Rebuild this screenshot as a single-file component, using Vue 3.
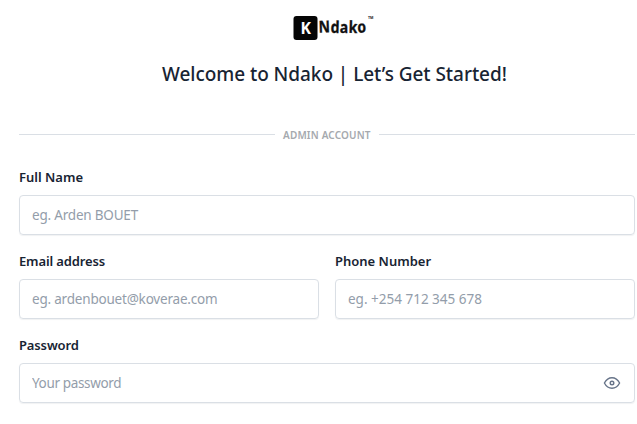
<script setup>
import { ref } from 'vue'

const showPassword = ref(false)
const fields = [
  { id: 'name', label: 'Full Name', type: 'text', placeholder: 'eg. Arden BOUET', wide: true },
  { id: 'email', label: 'Email address', type: 'email', placeholder: 'eg. ardenbouet@koverae.com' },
  { id: 'phone', label: 'Phone Number', type: 'tel', placeholder: 'eg. +254 712 345 678' },
  { id: 'password', label: 'Password', type: 'password', placeholder: 'Your password', wide: true },
]
</script>

<template>
  <main class="page">
    <svg class="logo" width="84" height="28" viewBox="0 0 84 28">
      <rect x="1.5" y="3" width="24" height="24" rx="3" fill="#050505" />
      <text class="mark" x="8.6" y="20.5" textLength="10.5" lengthAdjust="spacingAndGlyphs">K</text>
      <text class="word" transform="scale(.85 1)" y="19.8" x="31.4 45.4 56.2 66.6 77" rotate="-2 2 0 2 -2">Ndako</text>
      <text class="tm" x="76" y="6" textLength="5.5" lengthAdjust="spacingAndGlyphs">TM</text>
    </svg>
    <h1 class="title">Welcome to Ndako | Let’s Get Started!</h1>
    <div class="divider"><span>Admin account</span></div>
    <form class="form" @submit.prevent>
      <div v-for="f in fields" :key="f.id" class="field" :class="[f.id, { wide: f.wide }]">
        <label :for="f.id">{{ f.label }}</label>
        <div class="control">
          <input
            :id="f.id"
            :type="f.id === 'password' && showPassword ? 'text' : f.type"
            :placeholder="f.placeholder"
          />
          <button v-if="f.id === 'password'" type="button" class="eye" @click="showPassword = !showPassword">
            <svg width="18" height="14" viewBox="0 0 18 14" fill="none" stroke="#677489" stroke-width="1.4">
              <path d="M1.4 7C3.3 3.4 5.8 1.7 9 1.7S14.7 3.4 16.6 7C14.7 10.6 12.2 12.3 9 12.3S3.3 10.6 1.4 7Z" stroke-linejoin="round" />
              <circle cx="9" cy="7" r="1.8" />
            </svg>
          </button>
        </div>
      </div>
    </form>
  </main>
</template>

<style>
body {
  margin: 0;
  background: #fff;
}
</style>

<style scoped>
.page {
  box-sizing: border-box;
  width: 637px;
  height: 424px;
  padding: 13px 2px 0 19px;
  display: flex;
  flex-direction: column;
  overflow: hidden;
  color: #182433;
  font-family: "Noto Sans", sans-serif;
}
.logo {
  display: block;
  flex: none;
  margin-left: 273px;
}
.mark {
  font: 700 16px "Noto Sans", sans-serif;
  fill: #fff;
}
.word {
  font: 700 16.5px "Noto Sans", sans-serif;
  fill: #111;
  stroke: #111;
  stroke-width: 0.3px;
}
.tm {
  font: 700 4px "Noto Sans", sans-serif;
  fill: #222;
}
.title {
  margin: 17px 0 0 143px;
  font-size: 19px;
  line-height: 32px;
  font-weight: 500;
  letter-spacing: -0.05px;
  white-space: nowrap;
}
.divider {
  display: flex;
  align-items: center;
  gap: 8px;
  height: 16px;
  margin-top: 36px;
  color: #a5a9ae;
  font-size: 10px;
  line-height: 16px;
  font-weight: 600;
  text-transform: uppercase;
  letter-spacing: 0.18px;
}
.divider span {
  width: 88px;
  white-space: nowrap;
  padding-top: 1px;
}
.divider::before,
.divider::after {
  content: "";
  flex: 1;
  height: 1px;
  background: #dadfe5;
}
.form {
  display: grid;
  grid-template-columns: 1fr 1fr;
  gap: 16px;
  margin-top: 25px;
}
.wide {
  grid-column: 1 / -1;
}
.field label {
  display: block;
  height: 20px;
  margin-bottom: 8px;
  font-size: 13px;
  line-height: 20px;
  font-weight: 600;
}
.email label,
.password label {
  letter-spacing: -0.13px;
}
.control {
  box-sizing: border-box;
  display: flex;
  align-items: center;
  height: 40px;
  border: 1px solid #dadfe5;
  border-radius: 4px;
  box-shadow: 0 1px 1px rgba(24, 36, 51, 0.06);
}
input {
  flex: 1;
  min-width: 0;
  height: 38px;
  box-sizing: border-box;
  padding: 0 12px;
  border: 0;
  outline: 0;
  background: transparent;
  color: #182433;
  font: 400 13.5px "Noto Sans", sans-serif;
  letter-spacing: -0.2px;
}
.phone input {
  letter-spacing: 0;
}
.password input {
  letter-spacing: -0.35px;
}
input::placeholder {
  color: #939daa;
  opacity: 1;
}
.eye {
  display: flex;
  margin-right: 13px;
  padding: 0;
  border: 0;
  background: none;
}
</style>
